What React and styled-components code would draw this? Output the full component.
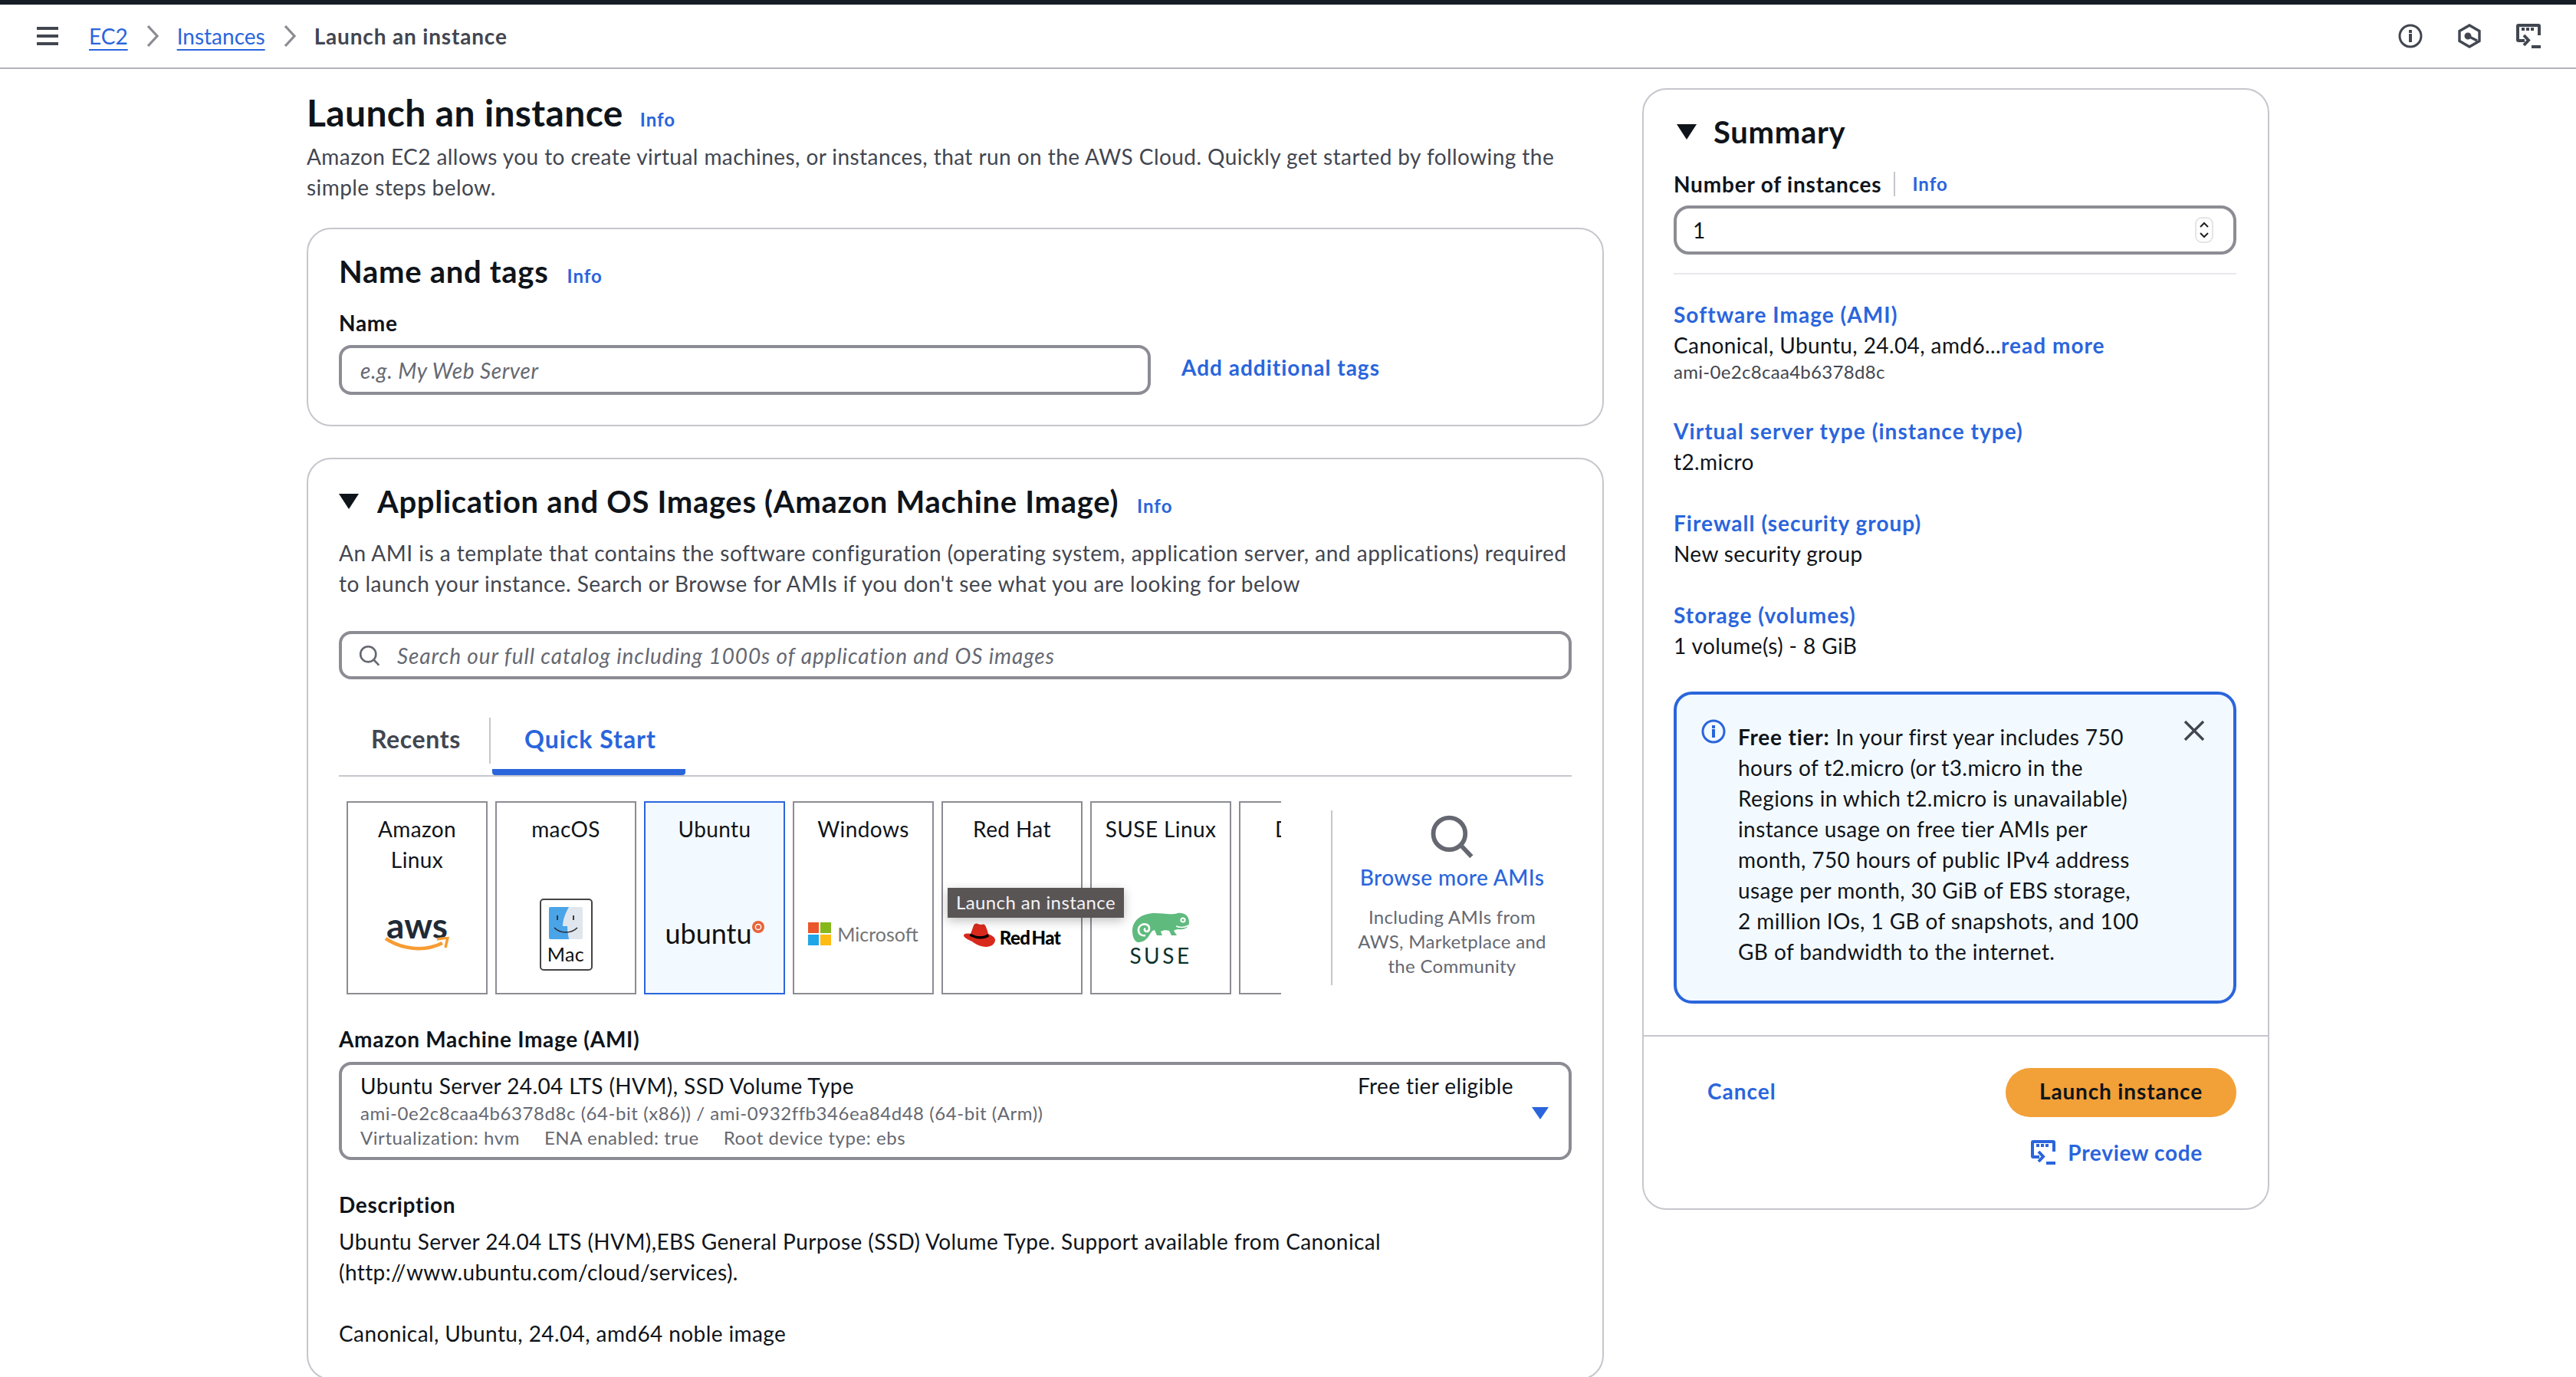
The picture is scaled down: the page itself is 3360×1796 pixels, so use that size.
import React from "react";
import styled, { createGlobalStyle } from "styled-components";

const GlobalStyle = createGlobalStyle`
  html, body {
    margin: 0;
    padding: 0;
    height: 100%;
    overflow: hidden;
    background: #fff;
    font-family: "Lato", "Noto Sans", sans-serif;
    font-size: 28px;
    line-height: 40px;
    letter-spacing: 0.4px;
    color: #0f141a;
  }
  * { box-sizing: border-box; }
  b { letter-spacing: 0.8px; }
`;

const LINK = "#2a65dc";
const DARK = "#424650";
const SOFT = "#656871";

const Page = styled.div`
  height: 1796px;
  overflow: hidden;
`;
const TopBar = styled.header`
  height: 90px;
  border-top: 6px solid #161d26;
  border-bottom: 2px solid #b4b4bb;
  display: flex;
  align-items: center;
  padding: 0 46px 0 48px;
`;
const Burger = styled.div`
  width: 28px;
  height: 24px;
  margin-right: 40px;
  display: flex;
  flex-direction: column;
  justify-content: space-between;
  span {
    height: 4px;
    background: ${DARK};
  }
`;
const Crumbs = styled.nav`
  flex: 1;
  display: flex;
  align-items: center;
  gap: 24px;
  font-size: 28px;
`;
const CrumbLink = styled.a`
  color: ${LINK};
  letter-spacing: 0;
  text-decoration: underline;
  text-decoration-thickness: 2px;
  text-underline-offset: 6px;
`;
const CrumbHere = styled.span`
  color: ${DARK};
  font-weight: 700;
  letter-spacing: 0.83px;
`;
const TopIcons = styled.div`
  display: flex;
  gap: 45px;
`;
const Columns = styled.div`
  display: grid;
  grid-template-columns: 1692px 818px;
  column-gap: 50px;
  padding: 25px 0 0 400px;
  align-items: start;
`;
const Main = styled.main`
  padding-top: 4px;
`;
const TitleRow = styled.div`
  display: flex;
  align-items: baseline;
  gap: 22px;
`;
const Title = styled.h1`
  margin: 0;
  font-size: 48px;
  line-height: 56px;
  font-weight: 700;
  letter-spacing: 0.35px;
`;
const Info = styled.a`
  color: ${LINK};
  font-size: 24px;
  font-weight: 700;
  letter-spacing: 1px;
`;
const Lead = styled.p`
  margin: 8px 0 33px;
  color: ${DARK};
  width: 1660px;
  letter-spacing: 0.43px;
`;
const Card = styled.section`
  border: 2px solid #c6c6cd;
  border-radius: 32px;
  padding: 29px 40px 39px 40px;
  margin-bottom: 41px;
`;
const CardHead = styled.div`
  display: flex;
  align-items: baseline;
  gap: 24px;
  height: 52px;
`;
const CardTitle = styled.h2`
  margin: 0;
  font-size: 40px;
  line-height: 52px;
  font-weight: 700;
  letter-spacing: 0.7px;
`;
const Caret = styled.span`
  width: 0;
  height: 0;
  align-self: center;
  border-left: ${(p) => p.$w || 13}px solid transparent;
  border-right: ${(p) => p.$w || 13}px solid transparent;
  border-top: ${(p) => p.$h || 20}px solid ${(p) => p.$color || "#0f141a"};
`;
const Label = styled.div`
  font-weight: 700;
  letter-spacing: 0.7px;
  margin-top: ${(p) => p.$top ?? 21}px;
`;
const FieldRow = styled.div`
  display: flex;
  align-items: center;
  gap: 40px;
  margin-top: 9px;
`;
const Field = styled.input`
  width: ${(p) => p.$width || "100%"};
  height: ${(p) => p.$height || 65}px;
  border: 4px solid #8c8c94;
  border-radius: 16px;
  padding: 0 ${(p) => p.$pad || 24}px;
  font: italic 28px "Lato", sans-serif;
  letter-spacing: ${(p) => p.$track || 0.55}px;
  background: transparent;
  &::placeholder {
    color: ${SOFT};
    opacity: 1;
  }
`;
const BoldLink = styled.a`
  color: ${LINK};
  font-weight: 700;
  letter-spacing: 1px;
`;
const TagsLink = styled(BoldLink)`
  margin-bottom: 8px;
`;
const CancelLink = styled(BoldLink)`
  margin: 0 0 4px 44px;
`;
const Para = styled.p`
  margin: 21px 0 0;
  color: ${DARK};
  letter-spacing: 0.5px;
`;
const SearchBox = styled.div`
  position: relative;
  margin-top: 42px;
  svg {
    position: absolute;
    left: 26px;
    top: 18px;
  }
`;
const Tabs = styled.div`
  margin-top: 50px;
  height: 77px;
  border-bottom: 2px solid #c6c6cd;
  display: flex;
`;
const TabPlain = styled.div`
  width: 198px;
  padding: 8px 0 0 42px;
  font-size: 32px;
  font-weight: 700;
  letter-spacing: 0.6px;
  color: ${DARK};
  height: 60px;
  border-right: 2px solid #c6c6cd;
`;
const TabOn = styled.div`
  width: 252px;
  height: 75px;
  margin-left: 2px;
  padding: 8px 0 0 42px;
  font-size: 32px;
  font-weight: 700;
  letter-spacing: 1px;
  color: ${LINK};
  border-bottom: 8px solid ${LINK};
  border-radius: 0 0 4px 4px;
`;
const Picker = styled.div`
  margin-top: 32px;
  display: flex;
  align-items: flex-start;
`;
const Strip = styled.div`
  width: 1219px;
  margin-left: 10px;
  overflow: hidden;
  display: flex;
  gap: 10px;
`;
const Tile = styled.div`
  position: relative;
  flex: 0 0 184px;
  min-width: 0;
  height: 252px;
  padding-top: 14px;
  border: 2px solid ${(p) => (p.$on ? LINK : "#8c8c94")};
  background: ${(p) => (p.$on ? "#f3faff" : "#fff")};
  display: flex;
  flex-direction: column;
  text-align: center;
`;
const TileName = styled.div`
  height: 82px;
  padding: ${(p) => (p.$wrap ? "0 20px" : "0")};
  white-space: ${(p) => (p.$wrap ? "normal" : "nowrap")};
`;
const TileLogo = styled.div`
  flex: 1;
  display: flex;
  flex-direction: column;
  align-items: center;
  justify-content: center;
  padding-top: ${(p) => p.$drop || 0}px;
  padding-bottom: ${(p) => p.$lift || 0}px;
`;
const Tooltip = styled.div`
  position: absolute;
  z-index: 2;
  left: 6px;
  top: 111px;
  width: 230px;
  height: 39px;
  background: #5a5555;
  color: #f3f3f7;
  font-size: 24px;
  line-height: 37px;
  text-align: center;
  white-space: nowrap;
  box-shadow: 0 4px 14px rgba(0, 0, 0, 0.25);
`;
const AwsWord = styled.span`
  font-size: 46px;
  line-height: 30px;
  font-weight: 700;
  color: #1f2a37;
  letter-spacing: 0;
`;
const MacBox = styled.div`
  width: 69px;
  height: 94px;
  border: 2px solid #444;
  border-radius: 5px;
  display: flex;
  flex-direction: column;
  align-items: center;
  padding-top: 9px;
  font-size: 25px;
  line-height: 38px;
  color: #111;
`;
const UbuntuWord = styled.div`
  display: flex;
  align-items: flex-start;
  gap: 0;
  font-size: 36px;
  line-height: 44px;
  letter-spacing: 0;
  color: #111;
  padding-bottom: 4px;
`;
const DotSvg = styled.svg`
  margin-top: 6px;
`;
const LogoRow = styled.div`
  display: flex;
  align-items: center;
  gap: ${(p) => p.$gap || 6}px;
`;
const MsWord = styled.span`
  font-size: 25px;
  letter-spacing: 0;
  color: #747474;
`;
const HatWord = styled.span`
  font-size: 24px;
  font-weight: 900;
  color: #000;
  letter-spacing: -0.6px;
  padding-top: 8px;
  word-spacing: -3px;
`;
const SuseWord = styled.span`
  font-size: 28px;
  line-height: 32px;
  color: #0c322c;
  letter-spacing: 3.5px;
  font-weight: 400;
  margin-top: 0;
`;
const Browse = styled.div`
  flex: 0 0 314px;
  margin: 12px 0 0 65px;
  height: 228px;
  border-left: 2px solid #c6c6cd;
  display: flex;
  flex-direction: column;
  align-items: center;
  padding-top: 5px;
`;
const BrowseLink = styled.a`
  color: ${LINK};
  font-weight: 500;
  margin-top: 4px;
`;
const BrowseNote = styled.div`
  margin-top: 16px;
  font-size: 24px;
  line-height: 32px;
  letter-spacing: 0.3px;
  color: ${SOFT};
  text-align: center;
  width: 250px;
`;
const Select = styled.div`
  margin-top: 10px;
  height: 128px;
  border: 4px solid #8c8c94;
  border-radius: 16px;
  padding: 7px 26px 0 24px;
  display: flex;
  justify-content: space-between;
`;
const SelectMeta = styled.div`
  font-size: 24px;
  line-height: 32px;
  letter-spacing: 0.55px;
  color: ${SOFT};
  display: flex;
  gap: ${(p) => p.$gap || 0}px;
`;
const SelectSide = styled.div`
  width: 249px;
  display: flex;
  flex-direction: column;
  align-items: flex-start;
  span:last-child {
    align-self: flex-end;
    margin-top: 8px;
  }
`;
const Plain = styled.div`
  margin-top: ${(p) => p.$top || 0}px;
`;
const Summary = styled.aside`
  border: 2px solid #c6c6cd;
  border-radius: 32px;
  height: 1463px;
`;
const SummaryBody = styled.div`
  padding: 29px 41px 0 39px;
`;
const SumHead = styled.div`
  display: flex;
  align-items: center;
  gap: 22px;
  height: 52px;
  padding-left: 4px;
`;
const LabelRow = styled.div`
  display: flex;
  align-items: center;
  margin-top: 22px;
  font-weight: 700;
  letter-spacing: 0.8px;
  em {
    font-style: normal;
    border-left: 2px solid #c6c6cd;
    height: 32px;
    margin: 0 22px 0 16px;
  }
`;
const NumberBox = styled.div`
  margin-top: 8px;
  height: 64px;
  border: 4px solid #8c8c94;
  border-radius: 20px;
  padding: 0 26px 0 21px;
  display: flex;
  align-items: center;
  justify-content: space-between;
`;
const Rule = styled.div`
  margin-top: 24px;
  border-top: 2px solid #e8e8ee;
`;
const SumItem = styled.div`
  margin-top: ${(p) => p.$top || 40}px;
`;
const SumLink = styled.a`
  display: block;
  color: ${LINK};
  font-weight: 700;
  letter-spacing: 1.05px;
`;
const AmiId = styled.div`
  font-size: 24px;
  line-height: 32px;
  letter-spacing: 0.3px;
  color: ${DARK};
  margin-top: -1px;
`;
const Alert = styled.div`
  margin-top: 40px;
  height: 407px;
  border: 4px solid ${LINK};
  border-radius: 24px;
  background: #f3faff;
  padding: 32px 0 0 32px;
  display: flex;
  gap: 16px;
`;
const AlertText = styled.div`
  flex: 0 0 530px;
  padding-top: 3px;
`;
const Close = styled.div`
  margin: -2px 0 0 35px;
`;
const Footer = styled.div`
  margin-top: 41px;
  border-top: 2px solid #c6c6cd;
  padding: 41px 41px 0 39px;
`;
const FootRow = styled.div`
  display: flex;
  align-items: center;
  justify-content: space-between;
`;
const Launch = styled.button`
  width: 301px;
  height: 64px;
  border: none;
  border-radius: 32px;
  padding: 0 0 4px;
  background: #f2a038;
  color: #0f141a;
  font: 700 28px "Lato", sans-serif;
  letter-spacing: 0.85px;
`;
const Preview = styled.a`
  display: flex;
  align-items: center;
  justify-content: flex-end;
  gap: 16px;
  margin: 26px 44px 0 0;
  color: ${LINK};
  font-weight: 700;
  letter-spacing: 0.7px;
`;

const Chevron = () => (
  <svg width="16" height="28" viewBox="0 0 16 28" fill="none">
    <path d="M2 1l12 13L2 27" stroke="#8c8c94" strokeWidth="3.2" />
  </svg>
);

const Terminal = ({ size = 32, color = DARK }) => (
  <svg width={size} height={size} viewBox="0 0 32 32" fill="none" stroke={color} strokeWidth="4">
    <path d="M11 22H3a1 1 0 0 1-1-1V3a1 1 0 0 1 1-1h26a1 1 0 0 1 1 1v12" />
    <path d="M7 7h4M13 7h4M19 7h4" strokeWidth="4" />
    <path d="M10 15l6 6.5-6 6.5M20 30h12" />
  </svg>
);

const InfoCircle = ({ size = 32, color = DARK, w = 3 }) => (
  <svg width={size} height={size} viewBox="0 0 32 32" fill="none" stroke={color} strokeWidth={w}>
    <circle cx="16" cy="16" r="14" />
    <path d="M16 13v11M16 8v4" strokeWidth="4" />
  </svg>
);

const HexIcon = () => (
  <svg width="32" height="32" viewBox="0 0 32 32" fill="none" stroke={DARK} strokeWidth="3.4">
    <path d="M16 2l13 7.5v13L16 30 3 22.5v-13z" />
    <circle cx="14" cy="16" r="2.8" fill={DARK} />
    <path d="M14 16l12 6" />
  </svg>
);

const SearchIcon = ({ size = 28, w = 3, color = "#656871" }) => (
  <svg width={size} height={size} viewBox="0 0 32 32" fill="none" stroke={color} strokeWidth={w}>
    <circle cx="14" cy="14" r="11.5" />
    <path d="M22 22l8 8.5" />
  </svg>
);

const AwsSmile = () => (
  <svg width="84" height="20" viewBox="0 0 84 20" fill="none">
    <path d="M1 2c20 14 50 18 74 6" stroke="#f79c33" strokeWidth="4.5" />
    <path d="M68 3l14-2-3 13" stroke="#f79c33" strokeWidth="3.5" />
  </svg>
);

const Finder = () => (
  <svg width="44" height="42" viewBox="0 0 44 42">
    <rect width="44" height="42" rx="2" fill="#dfe6ee" />
    <path d="M2 0h24c-5 9-8 17-8 25h6c0 6 1 12 2 17H2a2 2 0 0 1-2-2V2a2 2 0 0 1 2-2z" fill="#4aa4e8" />
    <path d="M11 11v6M32 11v6" stroke="#2b2b2b" strokeWidth="1.8" />
    <path d="M7 27c8 8 22 8 30 0" stroke="#2b2b2b" strokeWidth="1.6" fill="none" />
  </svg>
);

const UbuntuDot = () => (
  <DotSvg width="16" height="16" viewBox="0 0 16 16">
    <circle cx="8" cy="8" r="8" fill="#e9643a" />
    <circle cx="8" cy="8" r="3.6" fill="none" stroke="#fff" strokeWidth="1.5" />
  </DotSvg>
);

const MsSquares = () => (
  <svg width="30" height="30" viewBox="0 0 30 30">
    <rect width="14" height="14" fill="#e9572b" />
    <rect x="16" width="14" height="14" fill="#86b81b" />
    <rect y="16" width="14" height="14" fill="#1fa6e6" />
    <rect x="16" y="16" width="14" height="14" fill="#fdbb13" />
  </svg>
);

const RedHatLogo = () => (
  <svg width="41" height="31" viewBox="0 0 41 31">
    <path d="M9 14L13 3c1-2 3-3 5-2l4 1c2 0 4-1 5 0 2 1 4 8 5 12 4 2 9 4 9 8 0 5-5 9-12 9-6 0-13-3-18-7C5 21 0 19 0 16c0-2 3-3 9-2z" fill="#d9291c" />
    <path d="M9 13.5c5 3 15 6 22.8.4l1.2 3.6c-7 5-18 3-25.4-.8z" fill="#000" />
  </svg>
);

const Chameleon = () => (
  <svg width="76" height="40" viewBox="0 0 76 40" fill="none">
    <path
      d="M1 24C1 10 14 1 30 1c13 0 22 3 30 0 7-1 15 2 15 12 0 8-8 10-14 9-3 0-5 1-6 2l4 6h-7l-3-6c-3-1-8-1-11 1l2 5h-7l-3-7c-4 1-5 4-7 7-3 5-8 9-14 9C4 39 1 32 1 24z"
      fill="#5fba7e"
    />
    <path d="M18 30c-5 1-9-2-9-7 0-6 6-9 11-7 4 2 4 8 0 9-3 0-4-3-2-4" stroke="#fff" strokeWidth="2.6" />
    <circle cx="67" cy="10" r="3.6" fill="#fff" />
    <circle cx="67" cy="10" r="1.6" fill="#5fba7e" />
    <path d="M58 18c5 2 11 2 16-1" stroke="#fff" strokeWidth="1.6" />
  </svg>
);

const Spinner = () => (
  <svg width="24" height="34" viewBox="0 0 24 34" fill="none" stroke="#222" strokeWidth="2">
    <rect x="1" y="1" width="22" height="32" rx="8" stroke="#e4e4e8" />
    <path d="M7 13l5-5 5 5M7 21l5 5 5-5" />
  </svg>
);

const CloseIcon = () => (
  <svg width="28" height="28" viewBox="0 0 28 28" fill="none" stroke={DARK} strokeWidth="3.4">
    <path d="M2 2l24 24M26 2L2 26" />
  </svg>
);

export default function App() {
  return (
    <Page>
      <GlobalStyle />
      <TopBar>
        <Burger>
          <span />
          <span />
          <span />
        </Burger>
        <Crumbs>
          <CrumbLink>EC2</CrumbLink>
          <Chevron />
          <CrumbLink>Instances</CrumbLink>
          <Chevron />
          <CrumbHere>Launch an instance</CrumbHere>
        </Crumbs>
        <TopIcons>
          <InfoCircle />
          <HexIcon />
          <Terminal />
        </TopIcons>
      </TopBar>
      <Columns>
        <Main>
          <TitleRow>
            <Title>Launch an instance</Title>
            <Info>Info</Info>
          </TitleRow>
          <Lead>
            Amazon EC2 allows you to create virtual machines, or instances, that run on the AWS Cloud. Quickly get started by following the simple steps below.
          </Lead>
          <Card>
            <CardHead>
              <CardTitle>Name and tags</CardTitle>
              <Info>Info</Info>
            </CardHead>
            <Label>Name</Label>
            <FieldRow>
              <Field $width="1059px" placeholder="e.g. My Web Server" />
              <TagsLink>Add additional tags</TagsLink>
            </FieldRow>
          </Card>
          <Card>
            <CardHead>
              <Caret />
              <CardTitle>Application and OS Images (Amazon Machine Image)</CardTitle>
              <Info>Info</Info>
            </CardHead>
            <Para>
              An AMI is a template that contains the software configuration (operating system, application server, and applications) required to launch your instance. Search or Browse for AMIs if you don't see what you are looking for below
            </Para>
            <SearchBox>
              <SearchIcon />
              <Field $height={63} $pad={72} $track={0.9} placeholder="Search our full catalog including 1000s of application and OS images" />
            </SearchBox>
            <Tabs>
              <TabPlain>Recents</TabPlain>
              <TabOn>Quick Start</TabOn>
            </Tabs>
            <Picker>
              <Strip>
                <Tile>
                  <TileName $wrap>Amazon Linux</TileName>
                  <TileLogo $lift={4}>
                    <AwsWord>aws</AwsWord>
                    <AwsSmile />
                  </TileLogo>
                </Tile>
                <Tile>
                  <TileName>macOS</TileName>
                  <TileLogo>
                    <MacBox>
                      <Finder />
                      Mac
                    </MacBox>
                  </TileLogo>
                </Tile>
                <Tile $on>
                  <TileName>Ubuntu</TileName>
                  <TileLogo>
                    <UbuntuWord>
                      ubuntu
                      <UbuntuDot />
                    </UbuntuWord>
                  </TileLogo>
                </Tile>
                <Tile>
                  <TileName>Windows</TileName>
                  <TileLogo $lift={3}>
                    <LogoRow $gap={8}>
                      <MsSquares />
                      <MsWord>Microsoft</MsWord>
                    </LogoRow>
                  </TileLogo>
                </Tile>
                <Tile>
                  <TileName>Red Hat</TileName>
                  <TileLogo>
                    <LogoRow>
                      <RedHatLogo />
                      <HatWord>Red Hat</HatWord>
                    </LogoRow>
                  </TileLogo>
                  <Tooltip>Launch an instance</Tooltip>
                </Tile>
                <Tile>
                  <TileName>SUSE Linux</TileName>
                  <TileLogo $drop={14}>
                    <Chameleon />
                    <SuseWord>SUSE</SuseWord>
                  </TileLogo>
                </Tile>
                <Tile>
                  <TileName>Debian</TileName>
                </Tile>
              </Strip>
              <Browse>
                <SearchIcon size={58} w={3.2} />
                <BrowseLink>Browse more AMIs</BrowseLink>
                <BrowseNote>Including AMIs from AWS, Marketplace and the Community</BrowseNote>
              </Browse>
            </Picker>
            <Label $top={38}>Amazon Machine Image (AMI)</Label>
            <Select>
              <div>
                <div>Ubuntu Server 24.04 LTS (HVM), SSD Volume Type</div>
                <SelectMeta>ami-0e2c8caa4b6378d8c (64-bit (x86)) / ami-0932ffb346ea84d48 (64-bit (Arm))</SelectMeta>
                <SelectMeta $gap={32}>
                  <span>Virtualization: hvm</span>
                  <span>ENA enabled: true</span>
                  <span>Root device type: ebs</span>
                </SelectMeta>
              </div>
              <SelectSide>
                <div>Free tier eligible</div>
                <Caret $w={11} $h={16} $color={LINK} />
              </SelectSide>
            </Select>
            <Label $top={38}>Description</Label>
            <Plain $top={8}>
              Ubuntu Server 24.04 LTS (HVM),EBS General Purpose (SSD) Volume Type. Support available from Canonical
              <br />
              (http://www.ubuntu.com/cloud/services).
            </Plain>
            <Plain $top={40}>Canonical, Ubuntu, 24.04, amd64 noble image</Plain>
          </Card>
        </Main>
        <Summary>
          <SummaryBody>
            <SumHead>
              <Caret />
              <CardTitle>Summary</CardTitle>
            </SumHead>
            <LabelRow>
              Number of instances
              <em />
              <Info>Info</Info>
            </LabelRow>
            <NumberBox>
              1
              <Spinner />
            </NumberBox>
            <Rule />
            <SumItem $top={32}>
              <SumLink>Software Image (AMI)</SumLink>
              <div>
                Canonical, Ubuntu, 24.04, amd6...<BoldLink>read more</BoldLink>
              </div>
              <AmiId>ami-0e2c8caa4b6378d8c</AmiId>
            </SumItem>
            <SumItem $top={41}>
              <SumLink>Virtual server type (instance type)</SumLink>
              <div>t2.micro</div>
            </SumItem>
            <SumItem>
              <SumLink>Firewall (security group)</SumLink>
              <div>New security group</div>
            </SumItem>
            <SumItem>
              <SumLink>Storage (volumes)</SumLink>
              <div>1 volume(s) - 8 GiB</div>
            </SumItem>
            <Alert>
              <InfoCircle color={LINK} w={3} />
              <AlertText>
                <b>Free tier:</b> In your first year includes 750 hours of t2.micro (or t3.micro in the Regions in which t2.micro is unavailable) instance usage on free tier AMIs per month, 750 hours of public IPv4 address usage per month, 30 GiB of EBS storage, 2 million IOs, 1 GB of snapshots, and 100 GB of bandwidth to the internet.
              </AlertText>
              <Close>
                <CloseIcon />
              </Close>
            </Alert>
          </SummaryBody>
          <Footer>
            <FootRow>
              <CancelLink>Cancel</CancelLink>
              <Launch>Launch instance</Launch>
            </FootRow>
            <Preview>
              <Terminal color={LINK} />
              Preview code
            </Preview>
          </Footer>
        </Summary>
      </Columns>
    </Page>
  );
}
